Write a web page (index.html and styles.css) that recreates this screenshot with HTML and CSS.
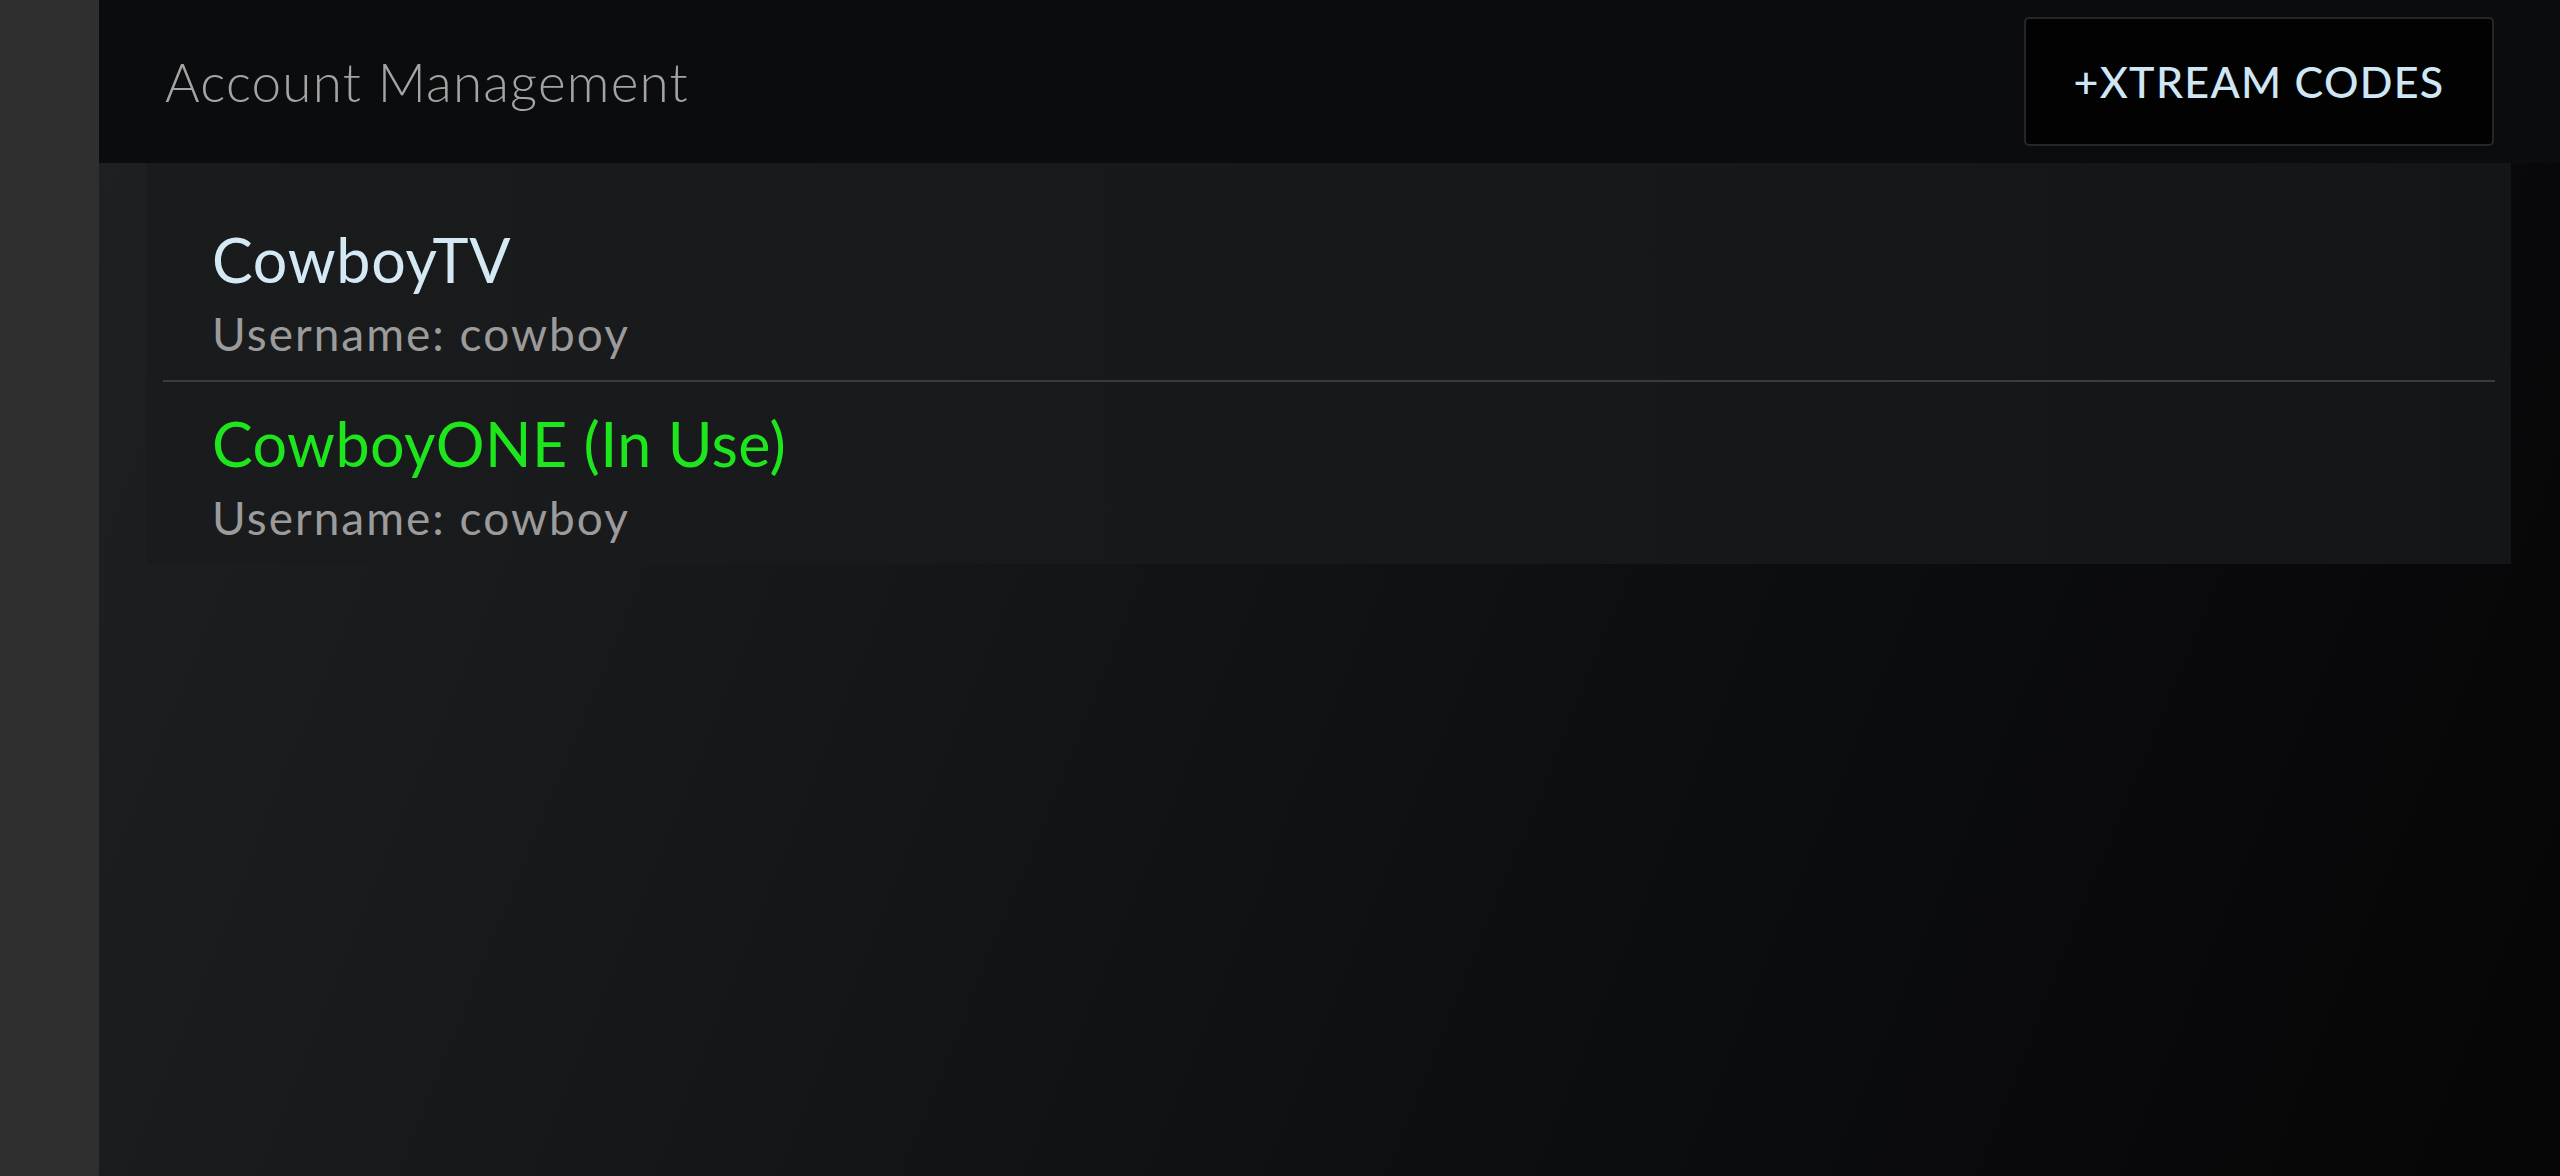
FILE: index.html
```html
<!DOCTYPE html>
<html lang="en">
<head>
<meta charset="utf-8">
<title>Account Management</title>
<link rel="stylesheet" href="styles.css">
</head>
<body>
<div class="app">
  <aside class="sidebar"></aside>
  <main class="main">
    <header class="header">
      <h1 class="title">Account Management</h1>
      <button class="add-btn">+XTREAM CODES</button>
    </header>
    <section class="content">
      <ul class="accounts">
        <li class="account">
          <div class="account-name">CowboyTV</div>
          <div class="account-user">Username: cowboy</div>
        </li>
        <li class="account">
          <div class="account-name in-use">CowboyONE (In Use)</div>
          <div class="account-user">Username: cowboy</div>
        </li>
      </ul>
    </section>
  </main>
</div>
</body>
</html>
```
FILE: styles.css
```css
* { box-sizing: border-box; }
html, body {
  margin: 0;
  padding: 0;
  width: 2560px;
  height: 1176px;
  overflow: hidden;
  background: #050506;
  font-family: "Lato", "Open Sans", sans-serif;
}
.app {
  display: flex;
  width: 2560px;
  height: 1176px;
}
.sidebar {
  width: 99px;
  flex: none;
  background: #2f2f2f;
}
.main {
  flex: 1;
  display: flex;
  flex-direction: column;
  background: linear-gradient(112deg, #1f2024 0%, #17181c 30%, #0e0f11 60%, #050506 100%);
}
.header {
  height: 163px;
  flex: none;
  display: flex;
  align-items: center;
  justify-content: space-between;
  padding: 0 66px 0 66px;
  background: #0b0c0e;
}
.title {
  margin: 0;
  font-size: 53px;
  font-weight: 300;
  color: #a4a4a4;
  line-height: 1.2;
  letter-spacing: 1.2px;
}
.add-btn {
  width: 470px;
  height: 129px;
  background: #020203;
  border: 2px solid #25262a;
  border-radius: 5px;
  color: #cfe6f4;
  font-family: "Lato", "Open Sans", sans-serif;
  font-size: 43px;
  font-weight: 500;
  letter-spacing: 1.3px;
  padding: 0;
}
.content {
  padding: 0 49px 0 48px;
}
.accounts {
  list-style: none;
  margin: 0;
  padding: 35px 16px 0;
  background: linear-gradient(90deg, #1a1b1d 0%, #17181b 60%, #141518 100%);
}
.account {
  padding: 25px 0 19px 49px;
}
.account + .account {
  border-top: 2px solid #3a3b3e;
}
.account-name {
  font-size: 61px;
  font-weight: 400;
  line-height: 73px;
  color: #d5e9f4;
  letter-spacing: 0.7px;
}
.account-name.in-use {
  color: #1de61d;
  letter-spacing: 0.4px;
}
.account-user {
  margin-top: 10px;
  font-size: 46px;
  font-weight: 400;
  line-height: 55px;
  color: #9b9b9b;
  letter-spacing: 2px;
}
```
